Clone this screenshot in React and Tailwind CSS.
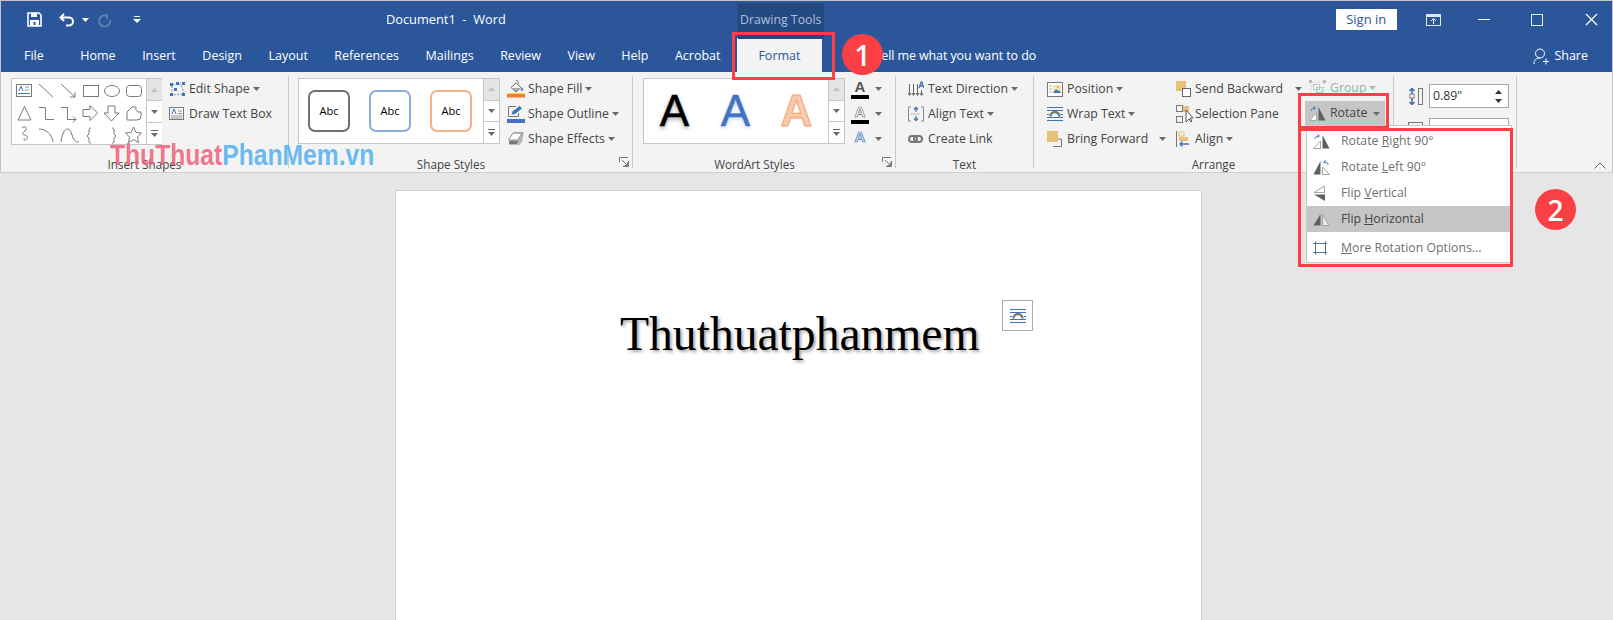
import React from "react";

const Caret = ({ c = "", color = "#6a6a6a" }) => (
  <svg width="7" height="4" viewBox="0 0 7 4" className={`shrink-0 ${c}`}><path d="M0 0h7L3.5 4z" fill={color} /></svg>
);

const Btn = ({ icon, text, caret, gap = "ml-[3px]", iconW = "w-[21px]", muted }) => (
  <div className={`flex h-[24.7px] items-center whitespace-nowrap ${muted ? "text-[#a8a8a8]" : ""}`}>
    <span className={`flex shrink-0 items-center ${iconW}`}>{icon}</span>
    <span>{text}</span>
    {caret && <Caret c={gap} color={muted ? "#b5b5b5" : "#6a6a6a"} />}
  </div>
);

const Launcher = () => (
  <svg width="10" height="10" viewBox="0 0 10 10" className="absolute bottom-[1px] right-[3px]" fill="none" stroke="#777">
    <path d="M.5 5V.5h8.500" /><path d="M9.500 4v5.500H4M3 3l5 5M8.500 5.500v3h-3" />
  </svg>
);

const Group = ({ w, label, children, launch }) => (
  <div className={`relative h-[92px] shrink-0 border-r border-[#c8c8c8] ${w}`}>
    <div className="flex h-[80px]">{children}</div>
    <div className={`h-[16px] text-center text-[11.7px] leading-[16px] text-[#444] ${launch ? "pr-[19px]" : ""}`}>{label}</div>
    {launch && <Launcher />}
  </div>
);

const ScrollCol = () => (
  <div className="flex w-[16px] shrink-0 flex-col border-l border-[#c6c6c6] bg-white">
    <div className="flex flex-1 items-center justify-center bg-[#e4e4e4]"><svg width="7" height="4"><path d="M0 4h7L3.5 0z" fill="#c2c2c2" /></svg></div>
    <div className="flex flex-1 items-center justify-center border-y border-[#c6c6c6]"><Caret /></div>
    <div className="flex flex-1 flex-col items-center justify-center gap-[2px]"><span className="h-px w-[7px] bg-[#666]" /><Caret /></div>
  </div>
);

const Shapes = () => (
  <svg width="134" height="67" viewBox="0 0 134 67" fill="none" stroke="#7a7a7a" strokeWidth="1" className="shrink-0">
    <rect x="4.500" y="5.500" width="15" height="12" />
    <path d="M7 12l2-5 2 5" stroke="#3f74b8" /><path d="M6 14.500h12" stroke="#3f74b8" /><path d="M13 8h4M13 11h4" stroke="#999" />
    <path d="M27 5l14 13M49 5l14 13M63 13v5h-5" />
    <rect x="71.500" y="6.500" width="15" height="11" />
    <ellipse cx="100" cy="12" rx="7.500" ry="5.500" />
    <rect x="114.500" y="6.500" width="15" height="11" rx="3" />
    <path d="M12.500 27.500L19 41H6zM27 28.500h6.500V40.500H42M49 28.500h6.500V40.500H64M61 37.500l3 3-3 3" />
    <path d="M71 30.500h7V26.500l7.500 7.500-7.500 7.500V37.500h-7z" />
    <path d="M96 27h7v7h4l-7.500 8-7.500-8h4z" />
    <path d="M120 28h4a4 4 0 0 0 2 5h3v4a4 4 0 0 1-4 4h-10v-8z" />
    <path d="M10 49c3-3 6 0 3 3-3 2-3 4 0 4 3 1 3 3 1 5-2 1-3-1-1-2" />
    <path d="M27 50c7 0 13 5 14 13M49 63c2-16 9-16 11-7 2 7 5 7 7 7" />
    <path d="M79 49c-2 0-2 1-2 3v3l-2 2 2 2v3c0 2 0 2 2 2M100 49c2 0 2 1 2 3v3l2 2-2 2v3c0 2 0 2-2 2" />
    <path d="M121.500 48l2.500 5.500 5.500.5-4 4 1 5.500-5-3-5 3 1-5.500-4-4 5.500-.5z" />
  </svg>
);

const EditShapeIcon = () => (
  <svg width="17" height="15" viewBox="0 0 17 15" fill="none">
    <path d="M3 3l9-1 3 10-12 1z" stroke="#888" strokeDasharray="2 1.500" />
    <g fill="#3f74b8"><rect x="1" y="1" width="3" height="3" /><rect x="7" y="0" width="3" height="3" /><rect x="13" y="0" width="3" height="3" /><rect x="5" y="6" width="3" height="3" /><rect x="13" y="11" width="3" height="3" /><rect x="1" y="11" width="3" height="3" /></g>
  </svg>
);
const TextBoxIcon = () => (
  <svg width="15" height="14" viewBox="0 0 15 14" fill="none" stroke="#7a7a7a">
    <rect x=".5" y=".5" width="14" height="12" />
    <path d="M3 7l2-5 2 5" stroke="#3f74b8" /><path d="M2 9h11M2 11h11" stroke="#999" /><path d="M9 4h4M9 6.500h4" stroke="#999" />
  </svg>
);
const FillIcon = () => (
  <svg width="18" height="18" viewBox="0 0 18 18" fill="none">
    <path d="M9 .5c2 0 2.500 1 2.500 3" stroke="#777" /><path d="M9 3l5 4.500-5 4.500-5-4.500z" stroke="#666" fill="#fff" /><path d="M5 8h8l-4 3.500z" fill="#a8a8a8" /><path d="M15 7l1.500 3.500h-3z" fill="#3f74b8" />
    <rect y="13" width="18" height="1" fill="#ffd23c" /><rect y="14" width="18" height="3.500" fill="#ed7d31" />
  </svg>
);
const OutlineIcon = () => (
  <svg width="18" height="17" viewBox="0 0 18 17" fill="none">
    <path d="M9 .5H1.500v10h10V7" stroke="#777" />
    <path d="M4.500 8.500l1-3 7-5.500 2.500 2.500-7 5.500z" fill="#3f74b8" /><rect y="13" width="18" height="4" fill="#4472c4" />
  </svg>
);
const EffectsIcon = () => (
  <svg width="18" height="15" viewBox="0 0 18 15">
    <path d="M7 1h10l-2 10-3 3H2z" fill="#b8b8b8" /><path d="M6 2h9l-4 7H1.500z" fill="#fff" stroke="#8a8a8a" /><path d="M2 10h9l-1 3H2z" fill="#777" />
  </svg>
);
const AFill = ({ c, bar = true }) => (
  <div className="flex h-[20px] w-[18px] flex-col items-center">
    <span className={`font-['Liberation_Sans',sans-serif] text-[15px] font-bold leading-[15px] ${c}`}>A</span>
    {bar && <span className="mt-[1px] h-[4px] w-[18px] bg-black" />}
  </div>
);
const TextDirIcon = () => (
  <svg width="16" height="17" viewBox="0 0 16 17" fill="none" stroke="#666">
    <path d="M1.500 3v11M5.500 3v11M9.500 3v11M13.500 9v5" /><path d="M0 12l1.500 2.500 1.500-2.500M4 12l1.500 2.500 1.500-2.500M8 12l1.500 2.500 1.500-2.500M12 12l1.500 2.500 1.500-2.500" />
    <path d="M11 7l2.500-6.500L16 7M12 5h3" stroke="#3f74b8" strokeWidth="1.300" />
  </svg>
);
const AlignIcon = () => (
  <svg width="16" height="16" viewBox="0 0 16 16" fill="none" stroke="#888">
    <path d="M3 1H.5v14H3M13 1h2.500v14H13" />
    <path d="M3 8h10" stroke="#999" strokeDasharray="1.500 1" /><path d="M8 2v4M6 3.500l2-2 2 2M8 10v4M6 12.500l2 2 2-2" stroke="#3f74b8" strokeWidth="1.300" />
  </svg>
);
const LinkIcon = () => (
  <svg width="15" height="8" viewBox="0 0 15 8" fill="none" stroke="#777" strokeWidth="2">
    <rect x="1" y="1" width="8" height="6" rx="3" /><rect x="6" y="1" width="8" height="6" rx="3" />
  </svg>
);
const PositionIcon = () => (
  <svg width="16" height="15" viewBox="0 0 16 15" fill="none">
    <rect x=".5" y=".5" width="15" height="14" stroke="#777" fill="#fff" />
    <path d="M2 4h3M2 7h3M2 10h3" stroke="#aaa" /><rect x="6" y="3" width="8" height="8" fill="#f6e2b8" /><circle cx="11" cy="5" r="1" fill="#e8a23c" /><path d="M6 11l3-4 2 2 1-1 2 3z" fill="#3f74b8" />
  </svg>
);
const WrapIcon = () => (
  <svg width="16" height="14" viewBox="0 0 16 14" fill="none">
    <path d="M0 .5h16M0 3.500h16M0 10.500h16M0 13.500h16M0 7.500h2M14 7.500h2" stroke="#3f74b8" /><path d="M3.500 9.500a4.500 4.500 0 0 1 9 0" stroke="#777" strokeWidth="2.400" />
  </svg>
);
const ForwardIcon = () => (
  <svg width="16" height="16" viewBox="0 0 16 16" fill="none">
    <path d="M6 15.500h8.500V8H11" stroke="#777" /><rect width="11" height="11" fill="#e8c07a" />
  </svg>
);
const BackIcon = () => (
  <svg width="15" height="16" viewBox="0 0 15 16" fill="none">
    <rect width="10" height="10" fill="#e8c07a" /><rect x="6.500" y="7.500" width="8" height="8" fill="#fff" stroke="#666" />
  </svg>
);
const PaneIcon = () => (
  <svg width="19" height="18" viewBox="0 0 19 18" fill="none" stroke="#777">
    <rect x=".5" y=".5" width="6" height="6" /><rect x=".5" y="11.500" width="6" height="6" /><rect x="7" y="1" width="6" height="6" fill="#e8c07a" stroke="none" />
    <path d="M10 5v12l3-3 2 3 1-1-2-3h3z" fill="#fff" stroke="#555" />
  </svg>
);
const AlignObjIcon = () => (
  <svg width="14" height="16" viewBox="0 0 14 16" fill="none">
    <path d="M.5 0v16" stroke="#777" /><rect x="3" y="1" width="5" height="4" stroke="#e8c07a" /><rect x="3" y="6" width="9" height="4" fill="#e8c07a" />
    <path d="M13 13H4M6.500 10.500L4 13l2.500 2.500" stroke="#3f74b8" strokeWidth="1.300" />
  </svg>
);
const GroupIcon = () => (
  <svg width="17" height="16" viewBox="0 0 17 16" fill="none" stroke="#c4c4c4">
    <rect x="4.500" y="4.500" width="6" height="5" /><rect x="7.500" y="7.500" width="6" height="5" />
    <path d="M2 2h13v12H2z" strokeDasharray="1.500 2" />
    <g fill="#bbb" stroke="none"><rect width="3" height="3" /><rect x="14" width="3" height="3" /><rect y="13" width="3" height="3" /><rect x="14" y="13" width="3" height="3" /></g>
  </svg>
);
const RotR = () => (
  <svg width="17" height="15" viewBox="0 0 17 15" fill="none">
    <path d="M.5 14.500L7.500 7v7.500z" stroke="#a5a5a5" fill="#fff" /><path d="M9.500 1L16.500 14.500H9.500z" fill="#5f5f5f" />
    <path d="M2 5c0-2 1-3 4-3M4.500 .5L6.500 2 4.500 3.500" stroke="#3f74b8" />
  </svg>
);
const RotL = () => (
  <svg width="17" height="15" viewBox="0 0 17 15" fill="none">
    <path d="M7.500 1L.5 14.500h7z" fill="#5f5f5f" /><path d="M9.500 7v7.500h7z" stroke="#a5a5a5" fill="#fff" />
    <path d="M15 5c0-2-1-3-4-3M12.500 .5L10.500 2l2 1.500" stroke="#3f74b8" />
  </svg>
);
const FlipV = () => (
  <svg width="13" height="17" viewBox="0 0 13 17" fill="none">
    <path d="M11.500 1v6.500H1z" stroke="#a5a5a5" fill="#fff" /><path d="M12 9.500V16L1 9.500z" fill="#5f5f5f" />
  </svg>
);
const FlipH = () => (
  <svg width="17" height="13" viewBox="0 0 17 13" fill="none">
    <path d="M7.500 1L.5 12.500h7z" fill="#5f5f5f" /><path d="M9.500 1v11.500h6.500z" stroke="#a5a5a5" fill="#e8e8e8" />
  </svg>
);
const MoreRot = () => (
  <svg width="15" height="14" viewBox="0 0 15 14" fill="none">
    <rect x="2.500" y="2.500" width="10" height="9" stroke="#3f74b8" />
    <path d="M0 2.500h15M0 11.500h15M2.500 0v14M12.500 0v14" stroke="#777" strokeDasharray="2 2" />
  </svg>
);
const HeightIcon = () => (
  <svg width="15" height="17" viewBox="0 0 15 17" fill="none">
    <path d="M4 1v15M1.500 3L4 .5 6.500 3M1.500 14L4 16.500 6.500 14" stroke="#3f74b8" strokeWidth="1.600" /><rect x="2" y="6" width="4" height="4" fill="#fff" stroke="#777" />
    <rect x="10.500" y=".5" width="4" height="16" stroke="#777" />
  </svg>
);
const MenuItem = ({ icon, children, on }) => (
  <div className={`flex h-[26px] items-center pl-[6px] ${on ? "bg-[#c6c6c6] text-[#444]" : "text-[#6f6f6f]"}`}>
    <span className="flex w-[28px] shrink-0 items-center">{icon}</span>
    <span>{children}</span>
  </div>
);
const U = ({ children }) => <span className="underline">{children}</span>;
const Tab = ({ children, c = "" }) => <span className={`shrink-0 ${c}`}>{children}</span>;
const Abc = ({ c }) => (
  <div className={`flex h-[42px] w-[42px] shrink-0 items-center justify-center rounded-[7px] border-2 bg-white text-[11px] text-black ${c}`}>Abc</div>
);
const BigA = ({ c }) => (
  <span className={`w-[61px] text-center font-['Liberation_Sans',sans-serif] text-[44px] leading-none ${c}`}>A</span>
);

export default function App() {
  return (
    <div className="relative flex h-[620px] w-[1613px] flex-col overflow-hidden bg-[#e6e6e6] font-['Open_Sans',sans-serif] text-[12.3px] text-[#444]">
      <div className="border-x border-t border-[#c4c4c4] bg-[#2b579a] text-white">
        <div className="relative flex h-[37px] items-center">
          <svg width="15" height="15" viewBox="0 0 15 15" className="ml-[26px] shrink-0" fill="none"><path d="M1 1h11l2 2v11H1z" stroke="#fff" strokeWidth="1.600" /><path d="M4 1h6v4H4zM3 8h9v6H3z" fill="#fff" /><rect x="6.500" y="10" width="2" height="3" fill="#2b579a" /></svg>
          <svg width="16" height="14" viewBox="0 0 16 14" className="ml-[17px] shrink-0" fill="none" stroke="#fff" strokeWidth="2"><path d="M5 1L1.500 4.500 5 8M2 4.500h8a4 4 0 0 1 0 8H7" /></svg>
          <Caret c="ml-[7px]" color="#fff" />
          <svg width="14" height="14" viewBox="0 0 14 14" className="ml-[9px] shrink-0" fill="none" stroke="#5f80b5" strokeWidth="2"><path d="M9 1v5M9 3a5.500 5.500 0 1 0 3 4" /></svg>
          <svg width="8" height="7" viewBox="0 0 8 7" className="ml-[21px] shrink-0" fill="#fff"><rect x="1" width="6" height="1" /><path d="M0 3h8L4 7z" /></svg>
          <span className="ml-[245px] shrink-0 whitespace-pre text-[12.8px]">Document1  -  Word</span>
          <div className="ml-[232px] mt-[2px] flex h-[36px] w-[86px] shrink-0 items-center justify-center bg-[#234a80] text-[12.3px] text-[#aebfd8]">Drawing Tools</div>
          <div className="ml-[512px] flex h-[21px] w-[61px] shrink-0 items-center justify-center bg-white text-[13px] text-[#2b579a]">Sign in</div>
          <svg width="15" height="12" viewBox="0 0 15 12" className="ml-[29px] shrink-0" fill="none"><rect x=".5" y=".5" width="14" height="11" stroke="#dfe6f1" /><rect y="0" width="15" height="3" fill="#dfe6f1" /><path d="M7.500 10V5M5 7l2.500-2.500L10 7" stroke="#fff" /></svg>
          <span className="ml-[37px] h-px w-[12px] shrink-0 bg-white" />
          <span className="ml-[41px] h-[12px] w-[12px] shrink-0 border-[1.5px] border-[#e8edf5]" />
          <svg width="13" height="13" viewBox="0 0 13 13" className="ml-[42px] shrink-0" stroke="#fff" strokeWidth="1.200"><path d="M1 1l11 11M12 1L1 12" /></svg>
        </div>
        <div className="flex h-[34px] items-center gap-[26.5px] pt-[3px] text-[12.5px]">
          <Tab c="ml-[23px] mr-[10px]">File</Tab>
          <Tab>Home</Tab><Tab>Insert</Tab><Tab>Design</Tab><Tab>Layout</Tab><Tab>References</Tab><Tab>Mailings</Tab><Tab>Review</Tab><Tab>View</Tab><Tab>Help</Tab><Tab>Acrobat</Tab>
          <div className="-ml-[10px] mt-[-3px] flex h-[34px] w-[85px] shrink-0 items-center justify-center bg-[#f3f3f3] pt-[3px] text-[#2b579a]">Format</div>
          <Tab c="ml-[26px] -tracking-[0.1px]">Tell me what you want to do</Tab>
          <div className="ml-auto mr-[24px] flex shrink-0 items-center gap-[5px]">
            <svg width="16" height="17" viewBox="0 0 16 17" fill="none" stroke="#fff"><circle cx="7" cy="5.500" r="4.500" /><path d="M1 16c0-4 2-6 6-6M10 13.500h6M13 10.500v6" /></svg>
            <span>Share</span>
          </div>
        </div>
      </div>

      <div className="flex h-[101px] shrink-0 border-x border-b border-x-[#c4c4c4] border-b-[#d0d0d0] bg-[#f3f3f3] pt-[4px]">
        <Group w="w-[288px]" label="Insert Shapes">
          <div className="ml-[10px] mt-[2px] flex h-[67px] w-[151px] shrink-0 border border-[#c6c6c6] bg-white"><Shapes /><ScrollCol /></div>
          <div className="ml-[7px] flex flex-col pt-[1px]">
            <Btn icon={<EditShapeIcon />} text="Edit Shape" caret iconW="w-[20px]" />
            <Btn icon={<TextBoxIcon />} text="Draw Text Box" iconW="w-[20px]" />
          </div>
        </Group>
        <Group w="w-[344px]" label="Shape Styles" launch>
          <div className="ml-[9px] mt-[2px] flex h-[66px] w-[202px] shrink-0 border border-[#c6c6c6] bg-white">
            <div className="flex flex-1 items-center gap-[19px] pl-[9px]">
              <Abc c="border-[#707070]" /><Abc c="border-[#8fabdc]" /><Abc c="border-[#f4b183]" />
            </div>
            <ScrollCol />
          </div>
          <div className="ml-[7px] flex flex-col pt-[1px]">
            <Btn icon={<FillIcon />} text="Shape Fill" caret />
            <Btn icon={<OutlineIcon />} text="Shape Outline" caret />
            <Btn icon={<EffectsIcon />} text="Shape Effects" caret />
          </div>
        </Group>
        <Group w="w-[263px]" label="WordArt Styles" launch>
          <div className="ml-[10px] mt-[2px] flex h-[66px] w-[202px] shrink-0 border border-[#c6c6c6] bg-white">
            <div className="flex flex-1 items-center">
              <BigA c="text-black [-webkit-text-stroke:0.5px_#000] [text-shadow:0_2px_4px_#999]" />
              <BigA c="text-[#4472c4] [-webkit-text-stroke:0.5px_#4472c4] [text-shadow:0_2px_4px_#c5cfe5]" />
              <BigA c="font-bold text-[#f8cbad] [-webkit-text-stroke:1px_#f4a46e]" />
            </div>
            <ScrollCol />
          </div>
          <div className="ml-[6px] flex flex-col pt-[1px]">
            <div className="flex h-[24.7px] items-center gap-[6px]"><AFill c="text-[#555]" /><Caret /></div>
            <div className="flex h-[24.7px] items-center gap-[6px]"><AFill c="text-white [-webkit-text-stroke:0.6px_#666]" /><Caret /></div>
            <div className="flex h-[24.7px] items-center gap-[6px]"><AFill c="text-[#d6e4f5] [-webkit-text-stroke:0.7px_#3f74b8]" bar={false} /><Caret /></div>
          </div>
        </Group>
        <Group w="w-[138px]" label="Text">
          <div className="ml-[12px] flex flex-col pt-[1px]">
            <Btn icon={<TextDirIcon />} text="Text Direction" caret iconW="w-[20px]" />
            <Btn icon={<AlignIcon />} text="Align Text" caret iconW="w-[20px]" />
            <Btn icon={<LinkIcon />} text="Create Link" iconW="w-[20px]" />
          </div>
        </Group>
        <Group w="w-[360px]" label="Arrange">
          <div className="ml-[13px] flex w-[129px] shrink-0 flex-col pt-[1px]">
            <Btn icon={<PositionIcon />} text="Position" caret iconW="w-[20px]" />
            <Btn icon={<WrapIcon />} text="Wrap Text" caret iconW="w-[20px]" />
            <Btn icon={<ForwardIcon />} text="Bring Forward" caret gap="ml-[11px]" iconW="w-[20px]" />
          </div>
          <div className="flex w-[129px] shrink-0 flex-col pt-[1px]">
            <Btn icon={<BackIcon />} text="Send Backward" caret gap="ml-[12px]" iconW="w-[19px]" />
            <Btn icon={<PaneIcon />} text="Selection Pane" iconW="w-[19px]" />
            <Btn icon={<AlignObjIcon />} text="Align" caret iconW="w-[19px]" />
          </div>
          <div className="flex w-[80px] shrink-0 flex-col">
            <div className="pl-[4px]"><Btn icon={<GroupIcon />} text="Group" caret muted iconW="w-[21px]" /></div>
            <div className="flex h-[26px] items-center bg-[#c6c6c6] pl-[4px]">
              <span className="flex w-[21px] shrink-0 items-center"><RotR /></span><span>Rotate</span><Caret c="ml-[5px]" />
            </div>
          </div>
        </Group>
        <Group w="w-[123px]" label="">
          <div className="ml-[14px] mt-[8px] flex flex-col gap-[10px]">
            <div className="flex items-center gap-[6px]"><HeightIcon />
              <div className="flex h-[24px] w-[80px] items-center justify-between border border-[#a8a8a8] bg-white pl-[3px] pr-[6px] text-[#333]">
                <span>0.89"</span>
                <span className="flex flex-col gap-[5px]"><svg width="7" height="4"><path d="M0 4h7L3.5 0z" fill="#333" /></svg><Caret color="#333" /></span>
              </div>
            </div>
            <div className="flex items-center gap-[6px]"><span className="h-[16px] w-[15px] border border-[#777]" />
              <div className="h-[24px] w-[80px] border border-[#a8a8a8] bg-white" />
            </div>
          </div>
        </Group>
        <div className="flex flex-1 items-end justify-end pb-[3px] pr-[6px]">
          <svg width="12" height="7" viewBox="0 0 12 7" fill="none" stroke="#666"><path d="M.5 6.500L6 1l5.500 5.500" /></svg>
        </div>
      </div>

      <div className="flex-1 pl-[395px] pt-[17px]">
        <div className="relative h-[440px] w-[807px] border border-[#d0d0d0] bg-white pl-[224px] pt-[110px]">
          <span className="font-['Liberation_Serif',serif] text-[47.6px] leading-[66px] text-black [text-shadow:2px_2px_3px_#aaa]">Thuthuatphanmem</span>
          <div className="absolute left-[606px] top-[109px] flex h-[31px] w-[31px] items-center justify-center border border-[#ababab] bg-white">
            <WrapIcon />
          </div>
        </div>
      </div>

      {/* overlays */}
      <div className="absolute left-[110px] top-[139px] origin-left scale-x-[0.85] whitespace-nowrap font-['Liberation_Sans',sans-serif] text-[29px] font-bold leading-[32px]">
        <span className="text-[#f0607a]/85">ThuThuat</span><span className="text-[#4fb0f0]/85">PhanMem.vn</span>
      </div>

      <div className="absolute left-[1306px] top-[125px] flex h-[138px] w-[206px] flex-col border border-[#c8c8c8] bg-white pt-[2px]">
        <MenuItem icon={<RotR />}>Rotate <U>R</U>ight 90°</MenuItem>
        <MenuItem icon={<RotL />}>Rotate <U>L</U>eft 90°</MenuItem>
        <MenuItem icon={<FlipV />}>Flip <U>V</U>ertical</MenuItem>
        <MenuItem icon={<FlipH />} on>Flip <U>H</U>orizontal</MenuItem>
        <div className="mt-[1px] pt-[2px]">
          <MenuItem icon={<MoreRot />}><U>M</U>ore Rotation Options...</MenuItem>
        </div>
      </div>

      <div className="absolute left-[732px] top-[32px] h-[48px] w-[103px] border-[3px] border-[#ff3f45]" />
      <div className="absolute left-[1298px] top-[93px] h-[36px] w-[91px] border-[3px] border-[#ff3f45]" />
      <div className="absolute left-[1298px] top-[128px] h-[139px] w-[215px] border-[3px] border-[#ff3f45]" />
      <div className="absolute left-[842px] top-[34px] flex h-[41px] w-[41px] items-center justify-center rounded-full bg-[#fb4045] text-[28px] font-semibold text-white">1</div>
      <div className="absolute left-[1535px] top-[189px] flex h-[41px] w-[41px] items-center justify-center rounded-full bg-[#fb4045] text-[28px] font-semibold text-white">2</div>
    </div>
  );
}
